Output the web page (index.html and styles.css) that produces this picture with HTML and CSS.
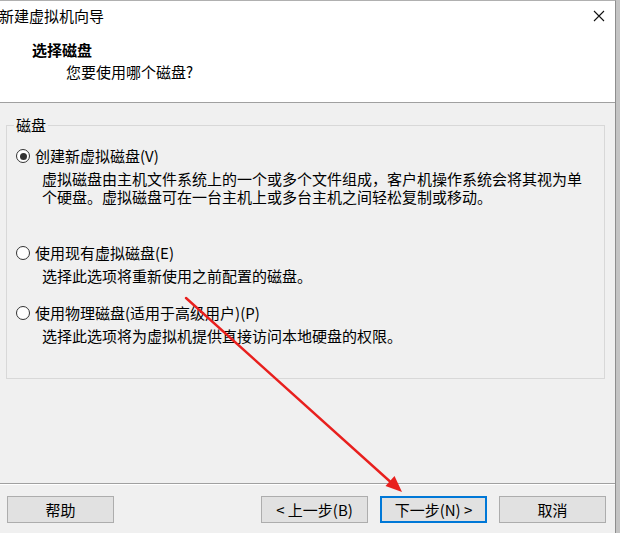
FILE: index.html
```html
<!DOCTYPE html>
<html lang="zh-CN">
<head>
<meta charset="utf-8">
<title>新建虚拟机向导</title>
<link rel="stylesheet" href="styles.css">
</head>
<body>
<div class="window">
  <div class="titlebar">
    <span class="title">新建虚拟机向导</span>
    <span class="close">
      <svg width="12" height="12" viewBox="0 0 12 12"><path d="M1 1L11 11M11 1L1 11" stroke="#111" stroke-width="1.1" fill="none"/></svg>
    </span>
  </div>
  <div class="header">
    <div class="h-title">选择磁盘</div>
    <div class="h-sub">您要使用哪个磁盘?</div>
  </div>
  <div class="body">
    <fieldset class="group">
      <legend class="legend">磁盘</legend>
      <div class="option opt1">
        <div class="label"><span class="radio checked"></span>创建新虚拟磁盘(V)</div>
        <div class="desc">虚拟磁盘由主机文件系统上的一个或多个文件组成，客户机操作系统会将其视为单个硬盘。虚拟磁盘可在一台主机上或多台主机之间轻松复制或移动。</div>
      </div>
      <div class="option opt2">
        <div class="label"><span class="radio"></span>使用现有虚拟磁盘(E)</div>
        <div class="desc">选择此选项将重新使用之前配置的磁盘。</div>
      </div>
      <div class="option opt3">
        <div class="label"><span class="radio"></span>使用物理磁盘(适用于高级用户)(P)</div>
        <div class="desc">选择此选项将为虚拟机提供直接访问本地硬盘的权限。</div>
      </div>
    </fieldset>
  </div>
  <div class="footer">
    <button class="btn">帮助</button>
    <div class="spacer"></div>
    <button class="btn">&lt; 上一步(B)</button>
    <button class="btn default">下一步(N) &gt;</button>
    <button class="btn">取消</button>
  </div>
</div>
<svg class="annotation" width="620" height="533" viewBox="0 0 620 533">
  <line x1="186" y1="298" x2="390" y2="481.5" stroke="#e8201e" stroke-width="2.4" stroke-linecap="round"/>
  <polygon points="402,492 385.5,486 394.5,476" fill="#e8201e"/>
</svg>
</body>
</html>
```
FILE: styles.css
```css
html, body {
  margin: 0;
  padding: 0;
}
body {
  width: 620px;
  height: 533px;
  background: #c4c4c4;
  font-family: "Noto Sans CJK SC", "Microsoft YaHei", sans-serif;
  font-size: 15px;
  line-height: 18px;
  color: #000;
  position: relative;
  overflow: hidden;
}
.window {
  width: 616px;
  height: 533px;
  box-sizing: border-box;
  border-top: 1px solid #b0b0b0;
  border-right: 1px solid #8e8e8e;
  background: #f0f0f0;
  display: flex;
  flex-direction: column;
}
.titlebar {
  height: 29px;
  background: #fff;
  display: flex;
  align-items: center;
  justify-content: space-between;
}
.title {
  margin-left: -1px;
  padding-top: 1px;
}
.close {
  width: 12px;
  height: 12px;
  margin-right: 10px;
  display: flex;
}
.header {
  height: 72px;
  background: #fff;
  border-bottom: 1px solid #a0a0a0;
  box-sizing: content-box;
  padding: 0;
}
.h-title {
  font-weight: bold;
  margin: 11px 0 0 32px;
}
.h-sub {
  margin: 4px 0 0 66px;
}
.body {
  flex: 1;
  padding: 13px 10px 0 6px;
}
.group {
  margin: 0;
  padding: 0 0 33px 0;
  border: 1px solid #d8d8d8;
  min-width: 0;
}
.legend {
  margin-left: 7px;
  padding: 0 2px;
}
.option .label {
  display: flex;
  align-items: center;
  padding-left: 9px;
}
.opt1 { margin-top: 13px; }
.opt2 { margin-top: 38px; }
.opt3 { margin-top: 19px; }
.radio {
  width: 12px;
  height: 12px;
  border: 1px solid #333;
  border-radius: 50%;
  background: #fff;
  margin-right: 5px;
  position: relative;
  flex: none;
}
.radio.checked::after {
  content: "";
  position: absolute;
  left: 2.5px;
  top: 2.5px;
  width: 7px;
  height: 7px;
  border-radius: 50%;
  background: #333;
}
.desc {
  margin: 5px 0 0 35px;
  width: 546px;
}
.footer {
  height: 50px;
  border-top: 1px solid #a0a0a0;
  box-shadow: inset 0 1px 0 #fff;
  display: flex;
  align-items: flex-start;
  padding: 12px 9px 0 7px;
  box-sizing: border-box;
  gap: 12px;
}
.spacer {
  flex: 1;
}
.btn {
  width: 107px;
  height: 27px;
  margin: 0;
  padding: 0;
  background: #e1e1e1;
  border: 1px solid #adadad;
  font-family: "Noto Sans CJK SC", "Microsoft YaHei", sans-serif;
  font-size: 15px;
  line-height: 18px;
  color: #000;
}
.btn.default {
  border: 1px solid #0078d7;
  box-shadow: inset 0 0 0 1px #0078d7;
}
.annotation {
  position: absolute;
  left: 0;
  top: 0;
  pointer-events: none;
}
```
